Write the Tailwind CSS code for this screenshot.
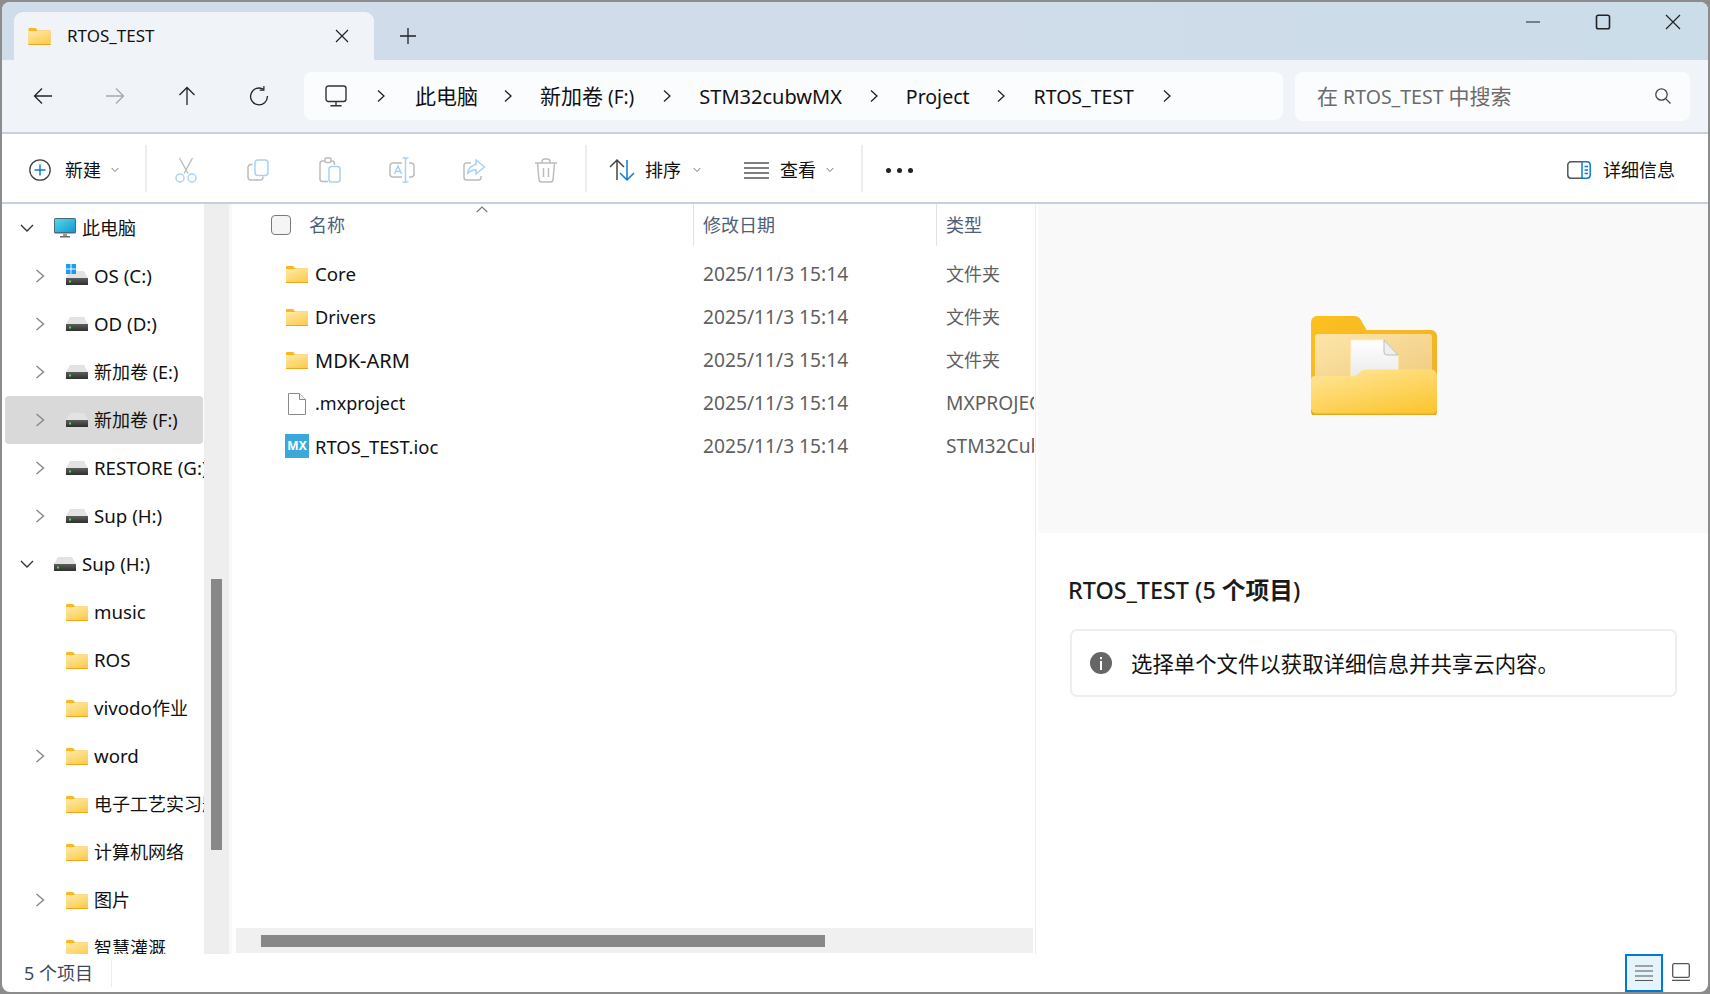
<!DOCTYPE html>
<html lang="zh-CN">
<head>
<meta charset="utf-8">
<title>RTOS_TEST</title>
<script src="https://cdn.jsdelivr.net/npm/@tailwindcss/browser@4"></script>
</head>
<body class="w-[1710px] h-[994px] overflow-hidden bg-[#8c8c8c] p-[2px] [font-family:'Noto_Sans','Noto_Sans_CJK_SC',sans-serif] text-[#111]">
<svg class="absolute w-0 h-0" aria-hidden="true">
  <defs>
    <linearGradient id="fb" x1="0" y1="0" x2="0.6" y2="1"><stop offset="0" stop-color="#ffeaa8"/><stop offset="1" stop-color="#fcce55"/></linearGradient>
    <linearGradient id="drv" x1="0" y1="0" x2="0" y2="1"><stop offset="0" stop-color="#5e5e5e"/><stop offset="1" stop-color="#2f2f2f"/></linearGradient>
    <linearGradient id="scr" x1="0" y1="0" x2="1" y2="1"><stop offset="0" stop-color="#52dbe6"/><stop offset="1" stop-color="#1596d6"/></linearGradient>
    <linearGradient id="bigback" x1="0" y1="0" x2="1" y2="1"><stop offset="0" stop-color="#fdc01f"/><stop offset="1" stop-color="#eeae2a"/></linearGradient>
    <linearGradient id="bigpaper" x1="0" y1="0" x2="1" y2="1"><stop offset="0" stop-color="#fde5a8"/><stop offset="1" stop-color="#efcb80"/></linearGradient>
    <linearGradient id="bigfront" x1="0.15" y1="0" x2="0.75" y2="1"><stop offset="0" stop-color="#ffe596"/><stop offset="1" stop-color="#fdc734"/></linearGradient>
    <linearGradient id="docg" x1="0" y1="0" x2="0" y2="1"><stop offset="0" stop-color="#ffffff"/><stop offset="1" stop-color="#e6e6e6"/></linearGradient>
    <symbol id="folder" viewBox="0 0 22 17">
      <path d="M0 1.2C0 .5.5 0 1.2 0h5.300c.5 0 .9.2 1.200.6L9 2.500h13V17H0z" fill="#fcb61f"/>
      <path d="M0 3h22v13H0z" fill="url(#fb)"/>
      <path d="M0 16h22v1H0z" fill="#eaa81e"/>
    </symbol>
    <symbol id="drive" viewBox="0 0 22 14">
      <path d="M4 0h14l4 7H0z" fill="#e3e3e3"/>
      <path d="M0 7h22v7H0z" fill="url(#drv)"/>
      <rect x="3" y="9.500" width="2" height="2" fill="#4be04b"/>
    </symbol>
  </defs>
</svg>

<div class="w-[1706px] h-[990px] bg-white rounded-[8px] overflow-hidden flex flex-col">
  <!-- title bar -->
  <div class="h-[58px] shrink-0 flex bg-gradient-to-r from-[#cfdcea] via-[#d1dcea] to-[#cbdde9]">
    <div class="w-[12px]"></div>
    <div class="mt-[10px] w-[360px] h-[48px] bg-[#f0f4f9] rounded-t-[9px] flex items-center pl-[14px]">
      <svg class="w-[23px] h-[17px]"><use href="#folder"/></svg>
      <span class="ml-[16px] text-[17px]">RTOS_TEST</span>
      <svg class="ml-auto mr-[24px] w-[16px] h-[16px]" viewBox="0 0 16 16" fill="none" stroke="#222" stroke-width="1.2"><path d="M2 2l12 12M14 2L2 14"/></svg>
    </div>
    <div class="mt-[10px] w-[68px] h-[48px] flex items-center justify-center">
      <svg class="w-[16px] h-[16px]" viewBox="0 0 16 16" fill="none" stroke="#222" stroke-width="1.3"><path d="M8 0v16M0 8h16"/></svg>
    </div>
    <div class="ml-auto flex h-[40px]">
      <div class="w-[70px] flex items-center justify-center"><svg class="w-[16px] h-[16px]" viewBox="0 0 16 16" stroke="#222" stroke-width="1.2"><path d="M1 8h14"/></svg></div>
      <div class="w-[70px] flex items-center justify-center"><svg class="w-[16px] h-[16px]" viewBox="0 0 16 16" fill="none" stroke="#222" stroke-width="1.6"><rect x="1.500" y="1.200" width="13" height="13.600" rx="1.800"/></svg></div>
      <div class="w-[70px] flex items-center justify-center"><svg class="w-[16px] h-[16px]" viewBox="0 0 16 16" fill="none" stroke="#222" stroke-width="1.2"><path d="M1 1l14 14M15 1L1 15"/></svg></div>
    </div>
  </div>

  <!-- address row -->
  <div class="h-[72px] shrink-0 bg-[#f0f4f9] flex items-center pl-[5px]">
    <div class="w-[72px] flex justify-center"><svg class="w-[20px] h-[20px]" viewBox="0 0 20 20" fill="none" stroke="#222" stroke-width="1.3"><path d="M19 10H1.500M9 2.500L1.500 10 9 17.500"/></svg></div>
    <div class="w-[72px] flex justify-center"><svg class="w-[20px] h-[20px]" viewBox="0 0 20 20" fill="none" stroke="#a8a8a8" stroke-width="1.3"><path d="M1 10h17.500M11 2.500l7.500 7.500-7.500 7.500"/></svg></div>
    <div class="w-[72px] flex justify-center"><svg class="w-[20px] h-[20px]" viewBox="0 0 20 20" fill="none" stroke="#222" stroke-width="1.3"><path d="M10 19V1.500M2.500 9L10 1.500 17.500 9"/></svg></div>
    <div class="w-[72px] flex justify-center"><svg class="w-[20px] h-[20px]" viewBox="0 0 20 20" fill="none" stroke="#222" stroke-width="1.3"><path d="M14.600 3.400A8.400 8.400 0 1 0 18.400 10"/><path d="M14.900 0v4.200h-4.200" stroke-width="1.2"/></svg></div>
    <div class="ml-[9px] w-[979px] h-[48px] bg-[#fbfcfe] rounded-[8px] flex items-center pl-[21px]">
      <svg class="w-[22px] h-[22px]" viewBox="0 0 22 22" fill="none" stroke="#333" stroke-width="1.4"><rect x="1" y="1" width="20" height="15.500" rx="2.500"/><path d="M11 16.500v4M5.500 20.700h11"/></svg>
      <svg class="ml-[29px] w-[10px] h-[14px]" viewBox="0 0 10 14" fill="none" stroke="#222" stroke-width="1.3"><path d="M2 1.500L8 7l-6 5.500"/></svg>
      <span class="ml-[29px] pt-[2px] text-[21px]">此电脑</span>
      <svg class="ml-[25px] w-[10px] h-[14px]" viewBox="0 0 10 14" fill="none" stroke="#222" stroke-width="1.3"><path d="M2 1.500L8 7l-6 5.500"/></svg>
      <span class="ml-[27px] pt-[2px] text-[19px] whitespace-nowrap"><span class="text-[21px]">新加卷</span> (F:)</span>
      <svg class="ml-[28px] w-[10px] h-[14px]" viewBox="0 0 10 14" fill="none" stroke="#222" stroke-width="1.3"><path d="M2 1.500L8 7l-6 5.500"/></svg>
      <span class="ml-[27px] pt-[2px] text-[20px]">STM32cubwMX</span>
      <svg class="ml-[27px] w-[10px] h-[14px]" viewBox="0 0 10 14" fill="none" stroke="#222" stroke-width="1.3"><path d="M2 1.500L8 7l-6 5.500"/></svg>
      <span class="ml-[27px] pt-[2px] text-[19.5px]">Project</span>
      <svg class="ml-[26px] w-[10px] h-[14px]" viewBox="0 0 10 14" fill="none" stroke="#222" stroke-width="1.3"><path d="M2 1.500L8 7l-6 5.500"/></svg>
      <span class="ml-[28px] pt-[2px] text-[19.5px]">RTOS_TEST</span>
      <svg class="ml-[28px] w-[10px] h-[14px]" viewBox="0 0 10 14" fill="none" stroke="#222" stroke-width="1.3"><path d="M2 1.500L8 7l-6 5.500"/></svg>
    </div>
    <div class="ml-[12px] w-[395px] h-[49px] bg-[#fbfcfe] rounded-[8px] flex items-center pl-[22px] text-[#6b6b6b]">
      <span class="pt-[2px] text-[19.5px] whitespace-nowrap"><span class="text-[21px]">在</span> RTOS_TEST <span class="text-[21px]">中搜索</span></span>
      <svg class="ml-auto mr-[18px] w-[18px] h-[18px]" viewBox="0 0 18 18" fill="none" stroke="#444" stroke-width="1.3"><circle cx="7.500" cy="7.500" r="5.700"/><path d="M11.600 11.600L16.500 16.500"/></svg>
    </div>
  </div>
  <div class="h-[2px] shrink-0 bg-[#c6d1dd]"></div>

  <!-- toolbar -->
  <div class="h-[68px] shrink-0 bg-white flex items-center pt-[4px]">
    <div class="w-[143px] flex items-center pl-[27px]">
      <svg class="w-[22px] h-[22px]" viewBox="0 0 22 22" fill="none"><circle cx="11" cy="11" r="10.200" stroke="#444" stroke-width="1.3"/><path d="M11 5.500v11M5.500 11h11" stroke="#0a7cd6" stroke-width="1.5"/></svg>
      <span class="ml-[14px] text-[18px]">新建</span>
      <svg class="ml-[10px] w-[8px] h-[6px]" viewBox="0 0 8 6" fill="none" stroke="#777"><path d="M.7 1l3.300 3.500L7.300 1"/></svg>
    </div>
    <div class="-mt-[4px] w-[2px] h-[47px] bg-[#eeeeee]"></div>
    <div class="ml-[3px] w-[72px] flex justify-center">
      <svg class="w-[24px] h-[26px]" viewBox="0 0 24 26" fill="none" stroke-width="1.4"><path d="M5.500 1l8.500 15.500M18.500 1L10 16.500" stroke="#bcbcbc"/><circle cx="6" cy="21" r="4" stroke="#a6d2f6"/><circle cx="18" cy="21" r="4" stroke="#a6d2f6"/></svg>
    </div>
    <div class="w-[72px] flex justify-center">
      <svg class="w-[24px] h-[24px]" viewBox="0 0 24 24" fill="none" stroke-width="1.5"><path d="M6.500 6.500H5a3 3 0 0 0-3 3V19a3 3 0 0 0 3 3h9a3 3 0 0 0 3-3v-.5" stroke="#bcbcbc"/><rect x="9" y="2" width="13" height="15.500" rx="3" stroke="#a6d2f6"/></svg>
    </div>
    <div class="w-[72px] flex justify-center">
      <svg class="w-[24px] h-[26px]" viewBox="0 0 24 26" fill="none" stroke-width="1.5"><path d="M7 4H4.500A2.500 2.500 0 0 0 2 6.500V22a2.500 2.500 0 0 0 2.500 2.500H10M16.500 8V6.500A2.500 2.500 0 0 0 14 4h-1.500" stroke="#bcbcbc"/><rect x="7" y="1" width="6" height="4.500" rx="1.500" stroke="#bcbcbc"/><rect x="11" y="9.500" width="11" height="15.500" rx="2.500" stroke="#a6d2f6"/></svg>
    </div>
    <div class="w-[72px] flex justify-center">
      <svg class="w-[26px] h-[26px]" viewBox="0 0 26 26" fill="none" stroke-width="1.5"><path d="M13 6H4a3 3 0 0 0-3 3v8a3 3 0 0 0 3 3h9M20 6h2a3 3 0 0 1 3 3v8a3 3 0 0 1-3 3h-2" stroke="#bcbcbc"/><path d="M16.500 1v24M13.500 1h6M13.500 25h6M5.500 17L9 9l3.500 8M6.800 14.500h4.500" stroke="#a6d2f6"/></svg>
    </div>
    <div class="w-[72px] flex justify-center">
      <svg class="w-[24px] h-[24px]" viewBox="0 0 24 24" fill="none" stroke-width="1.5"><path d="M9 5H4.500A2.500 2.500 0 0 0 2 7.500v12A2.500 2.500 0 0 0 4.500 22h12A2.500 2.500 0 0 0 19 19.500V18" stroke="#bcbcbc"/><path d="M14 2l8.500 7-8.500 7v-4c-4 0-6.500 1-8.500 4 .5-5 3.500-8.500 8.500-9.500z" stroke="#a6d2f6"/></svg>
    </div>
    <div class="w-[72px] flex justify-center">
      <svg class="w-[22px] h-[25px]" viewBox="0 0 22 25" fill="none" stroke="#bcbcbc" stroke-width="1.5"><path d="M0 5h22M7 5V3.500A2.500 2.500 0 0 1 9.500 1h3A2.500 2.500 0 0 1 15 3.500V5M2.500 5l1.500 17a2.500 2.500 0 0 0 2.500 2h9a2.500 2.500 0 0 0 2.500-2l1.500-17M8.500 10v9M13.500 10v9"/></svg>
    </div>
    <div class="-mt-[4px] ml-[3px] w-[2px] h-[47px] bg-[#eeeeee]"></div>
    <div class="w-[274px] flex items-center">
      <svg class="ml-[22px] w-[26px] h-[24px]" viewBox="0 0 26 24" fill="none" stroke-width="1.5"><path d="M8 22V2M1 9l7-7 7 7" stroke="#444"/><path d="M18 2v20M11 15l7 7 7-7" stroke="#0a7cd6"/></svg>
      <span class="ml-[10px] text-[18px]">排序</span>
      <svg class="ml-[12px] w-[8px] h-[6px]" viewBox="0 0 8 6" fill="none" stroke="#777"><path d="M.7 1l3.300 3.500L7.300 1"/></svg>
      <svg class="ml-[43px] w-[25px] h-[17px]" viewBox="0 0 25 17" stroke="#555" stroke-width="1.5"><path d="M0 1h25M0 6h25M0 11h25M0 16h25"/></svg>
      <span class="ml-[11px] text-[18px]">查看</span>
      <svg class="ml-[10px] w-[8px] h-[6px]" viewBox="0 0 8 6" fill="none" stroke="#777"><path d="M.7 1l3.300 3.500L7.300 1"/></svg>
    </div>
    <div class="-mt-[4px] w-[2px] h-[47px] bg-[#eeeeee]"></div>
    <div class="ml-[23px] flex gap-[6px]">
      <div class="w-[5px] h-[5px] rounded-full bg-[#222]"></div>
      <div class="w-[5px] h-[5px] rounded-full bg-[#222]"></div>
      <div class="w-[5px] h-[5px] rounded-full bg-[#222]"></div>
    </div>
    <svg class="ml-auto w-[24px] h-[18px]" viewBox="0 0 24 18" fill="none"><path d="M15 .8H4A3.200 3.200 0 0 0 .8 4v10A3.200 3.200 0 0 0 4 17.200h11" stroke="#555" stroke-width="1.5"/><path d="M15 .8h5A3.200 3.200 0 0 1 23.200 4v10a3.200 3.200 0 0 1-3.200 3.200h-5z" stroke="#0a7cd6" stroke-width="1.5"/><path d="M17.500 5.500h3.500M17.500 9h3.500M17.500 12.500h3.500" stroke="#0a7cd6" stroke-width="1.5"/></svg>
    <span class="ml-[12px] mr-[33px] text-[18px]">详细信息</span>
  </div>
  <div class="h-[2px] shrink-0 bg-[#c6d1dd]"></div>

  <!-- main -->
  <div class="h-[750px] shrink-0 flex">
    <!-- nav -->
    <div class="w-[202px] h-full overflow-hidden shrink-0">
      <div class="w-[198px] ml-[3px] h-[48px] flex items-center pl-[15px] whitespace-nowrap">
        <svg class="w-[14px] h-[10px] shrink-0" viewBox="0 0 14 10" fill="none" stroke="#333" stroke-width="1.4"><path d="M1 2l6 6 6-6"/></svg>
        <svg class="ml-[20px] w-[22px] h-[20px] shrink-0" viewBox="0 0 22 20"><rect width="22" height="15.500" rx="1.500" fill="#4a6a78"/><rect x="1" y="1" width="20" height="13" fill="url(#scr)"/><path d="M9 15.500h4V18H9z" fill="#9a9a9a"/><path d="M6 18h10v1.500H6z" fill="#6c6c6c"/></svg>
        <span class="ml-[6px] text-[18px]">此电脑</span>
      </div>
      <div class="w-[198px] ml-[3px] h-[48px] flex items-center pl-[28px] whitespace-nowrap">
        <svg class="w-[14px] h-[16px] shrink-0" viewBox="0 0 14 16" fill="none" stroke="#8a8a8a" stroke-width="1.5"><path d="M3.500 2l7 6-7 6"/></svg>
        <div class="ml-[19px] w-[22px] h-[24px] shrink-0 flex flex-col">
          <svg class="w-[10px] h-[10px] -mb-[3px] relative" viewBox="0 0 10 10" fill="#1e9bf0"><path d="M0 0h4.500v4.500H0zM5.500 0H10v4.500H5.500zM0 5.500h4.500V10H0zM5.500 5.500H10V10H5.500z"/></svg>
          <svg class="w-[22px] h-[14px]"><use href="#drive"/></svg>
        </div>
        <span class="ml-[6px] text-[18.7px]">OS (C:)</span>
      </div>
      <div class="w-[198px] ml-[3px] h-[48px] flex items-center pl-[28px] whitespace-nowrap">
        <svg class="w-[14px] h-[16px] shrink-0" viewBox="0 0 14 16" fill="none" stroke="#8a8a8a" stroke-width="1.5"><path d="M3.500 2l7 6-7 6"/></svg>
        <svg class="ml-[19px] w-[22px] h-[14px] shrink-0"><use href="#drive"/></svg>
        <span class="ml-[6px] text-[18.7px]">OD (D:)</span>
      </div>
      <div class="w-[198px] ml-[3px] h-[48px] flex items-center pl-[28px] whitespace-nowrap">
        <svg class="w-[14px] h-[16px] shrink-0" viewBox="0 0 14 16" fill="none" stroke="#8a8a8a" stroke-width="1.5"><path d="M3.500 2l7 6-7 6"/></svg>
        <svg class="ml-[19px] w-[22px] h-[14px] shrink-0"><use href="#drive"/></svg>
        <span class="ml-[6px] text-[18px]">新加卷 (E:)</span>
      </div>
      <div class="w-[198px] ml-[3px] h-[48px] flex items-center pl-[28px] whitespace-nowrap bg-[#d9d9d9] rounded-[4px]">
        <svg class="w-[14px] h-[16px] shrink-0" viewBox="0 0 14 16" fill="none" stroke="#8a8a8a" stroke-width="1.5"><path d="M3.500 2l7 6-7 6"/></svg>
        <svg class="ml-[19px] w-[22px] h-[14px] shrink-0"><use href="#drive"/></svg>
        <span class="ml-[6px] text-[18px]">新加卷 (F:)</span>
      </div>
      <div class="w-[198px] ml-[3px] h-[48px] flex items-center pl-[28px] whitespace-nowrap">
        <svg class="w-[14px] h-[16px] shrink-0" viewBox="0 0 14 16" fill="none" stroke="#8a8a8a" stroke-width="1.5"><path d="M3.500 2l7 6-7 6"/></svg>
        <svg class="ml-[19px] w-[22px] h-[14px] shrink-0"><use href="#drive"/></svg>
        <span class="ml-[6px] text-[18.7px]">RESTORE (G:)</span>
      </div>
      <div class="w-[198px] ml-[3px] h-[48px] flex items-center pl-[28px] whitespace-nowrap">
        <svg class="w-[14px] h-[16px] shrink-0" viewBox="0 0 14 16" fill="none" stroke="#8a8a8a" stroke-width="1.5"><path d="M3.500 2l7 6-7 6"/></svg>
        <svg class="ml-[19px] w-[22px] h-[14px] shrink-0"><use href="#drive"/></svg>
        <span class="ml-[6px] text-[18.7px]">Sup (H:)</span>
      </div>
      <div class="w-[198px] ml-[3px] h-[48px] flex items-center pl-[15px] whitespace-nowrap">
        <svg class="w-[14px] h-[10px] shrink-0" viewBox="0 0 14 10" fill="none" stroke="#333" stroke-width="1.4"><path d="M1 2l6 6 6-6"/></svg>
        <svg class="ml-[20px] w-[22px] h-[14px] shrink-0"><use href="#drive"/></svg>
        <span class="ml-[6px] text-[18.7px]">Sup (H:)</span>
      </div>
      <div class="w-[198px] ml-[3px] h-[48px] flex items-center pl-[61px] whitespace-nowrap">
        <svg class="w-[22px] h-[17px] shrink-0"><use href="#folder"/></svg>
        <span class="ml-[6px] text-[18.7px]">music</span>
      </div>
      <div class="w-[198px] ml-[3px] h-[48px] flex items-center pl-[61px] whitespace-nowrap">
        <svg class="w-[22px] h-[17px] shrink-0"><use href="#folder"/></svg>
        <span class="ml-[6px] text-[18.7px]">ROS</span>
      </div>
      <div class="w-[198px] ml-[3px] h-[48px] flex items-center pl-[61px] whitespace-nowrap">
        <svg class="w-[22px] h-[17px] shrink-0"><use href="#folder"/></svg>
        <span class="ml-[6px] text-[18.7px]">vivodo<span class="text-[18px]">作业</span></span>
      </div>
      <div class="w-[198px] ml-[3px] h-[48px] flex items-center pl-[28px] whitespace-nowrap">
        <svg class="w-[14px] h-[16px] shrink-0" viewBox="0 0 14 16" fill="none" stroke="#8a8a8a" stroke-width="1.5"><path d="M3.500 2l7 6-7 6"/></svg>
        <svg class="ml-[19px] w-[22px] h-[17px] shrink-0"><use href="#folder"/></svg>
        <span class="ml-[6px] text-[18.7px]">word</span>
      </div>
      <div class="w-[198px] ml-[3px] h-[48px] flex items-center pl-[61px] whitespace-nowrap">
        <svg class="w-[22px] h-[17px] shrink-0"><use href="#folder"/></svg>
        <span class="ml-[6px] text-[18px]">电子工艺实习题</span>
      </div>
      <div class="w-[198px] ml-[3px] h-[48px] flex items-center pl-[61px] whitespace-nowrap">
        <svg class="w-[22px] h-[17px] shrink-0"><use href="#folder"/></svg>
        <span class="ml-[6px] text-[18px]">计算机网络</span>
      </div>
      <div class="w-[198px] ml-[3px] h-[48px] flex items-center pl-[28px] whitespace-nowrap">
        <svg class="w-[14px] h-[16px] shrink-0" viewBox="0 0 14 16" fill="none" stroke="#8a8a8a" stroke-width="1.5"><path d="M3.500 2l7 6-7 6"/></svg>
        <svg class="ml-[19px] w-[22px] h-[17px] shrink-0"><use href="#folder"/></svg>
        <span class="ml-[6px] text-[18px]">图片</span>
      </div>
      <div class="w-[198px] ml-[3px] h-[48px] flex items-center pl-[61px] whitespace-nowrap">
        <svg class="w-[22px] h-[17px] shrink-0"><use href="#folder"/></svg>
        <span class="ml-[6px] text-[18px]">智慧灌溉</span>
      </div>
    </div>
    <!-- nav scrollbar -->
    <div class="w-[25px] h-full bg-[#eeeeee] shrink-0 pl-[7px] pt-[375px]">
      <div class="w-[11px] h-[271px] bg-[#888888]"></div>
    </div>
    <div class="w-[3px] h-full bg-[#f8f8f8] shrink-0"></div>

    <!-- file list -->
    <div class="relative w-[802px] h-full shrink-0 flex flex-col">
      <svg class="absolute left-[244px] top-[2px] w-[12px] h-[7px]" viewBox="0 0 12 7" fill="none" stroke="#777" stroke-width="1.1"><path d="M.7 6L6 1l5.300 5"/></svg>
      <div class="h-[42px] shrink-0 flex text-[18px] text-[#4d6078]">
        <div class="w-[461px] flex items-center pl-[39px]">
          <div class="w-[20px] h-[20px] rounded-[4px] border border-[#7a7a7a] bg-[#f5f5f5]"></div>
          <span class="ml-[18px]">名称</span>
        </div>
        <div class="w-[243px] flex items-center pl-[9px] border-l border-[#e3e3e3]">修改日期</div>
        <div class="w-[98px] flex items-center pl-[9px] border-l border-[#e3e3e3]">类型</div>
      </div>
      <div class="flex-1 pt-[7px] text-[19.2px]">
        <div class="h-[43px] flex items-center">
          <div class="w-[461px] flex items-center pl-[54px]"><svg class="w-[22px] h-[17px]"><use href="#folder"/></svg><span class="ml-[7px] text-[18.7px]">Core</span></div>
          <div class="w-[243px] pl-[10px] text-[#5f5f5f]">2025/11/3 15:14</div>
          <div class="w-[98px] pl-[10px] text-[18px] text-[#5f5f5f] overflow-hidden whitespace-nowrap">文件夹</div>
        </div>
        <div class="h-[43px] flex items-center">
          <div class="w-[461px] flex items-center pl-[54px]"><svg class="w-[22px] h-[17px]"><use href="#folder"/></svg><span class="ml-[7px] text-[18.1px]">Drivers</span></div>
          <div class="w-[243px] pl-[10px] text-[#5f5f5f]">2025/11/3 15:14</div>
          <div class="w-[98px] pl-[10px] text-[18px] text-[#5f5f5f] overflow-hidden whitespace-nowrap">文件夹</div>
        </div>
        <div class="h-[43px] flex items-center">
          <div class="w-[461px] flex items-center pl-[54px]"><svg class="w-[22px] h-[17px]"><use href="#folder"/></svg><span class="ml-[7px] text-[20px]">MDK-ARM</span></div>
          <div class="w-[243px] pl-[10px] text-[#5f5f5f]">2025/11/3 15:14</div>
          <div class="w-[98px] pl-[10px] text-[18px] text-[#5f5f5f] overflow-hidden whitespace-nowrap">文件夹</div>
        </div>
        <div class="h-[43px] flex items-center">
          <div class="w-[461px] flex items-center pl-[56px]"><svg class="w-[18px] h-[22px]" viewBox="0 0 18 22" fill="none" stroke="#8a8a8a"><path d="M.5.500h11l6 6v15H.500z" fill="#fff"/><path d="M11.500.500v6h6" fill="#f2f2f2"/></svg><span class="ml-[9px] text-[18px]">.mxproject</span></div>
          <div class="w-[243px] pl-[10px] text-[#5f5f5f]">2025/11/3 15:14</div>
          <div class="w-[98px] pl-[10px] text-[#5f5f5f] overflow-hidden whitespace-nowrap">MXPROJECT 文件</div>
        </div>
        <div class="h-[43px] flex items-center">
          <div class="w-[461px] flex items-center pl-[53px]"><div class="w-[24px] h-[24px] bg-[#39a9dc] flex items-center justify-center text-white text-[12px] font-bold leading-none">MX</div><span class="ml-[6px] text-[18.4px]">RTOS_TEST.ioc</span></div>
          <div class="w-[243px] pl-[10px] text-[#5f5f5f]">2025/11/3 15:14</div>
          <div class="w-[98px] pl-[10px] text-[#5f5f5f] overflow-hidden whitespace-nowrap">STM32CubeMX</div>
        </div>
      </div>
      <div class="h-[25px] mb-[1px] ml-[4px] mr-[1px] shrink-0 bg-[#f0f0f0] pl-[25px] pt-[7px]">
        <div class="w-[564px] h-[12px] bg-[#888888]"></div>
      </div>
    </div>

    <!-- divider -->
    <div class="w-[4px] h-full shrink-0 pl-[1px]"><div class="w-[1px] h-full bg-[#eeeeee]"></div></div>

    <!-- details -->
    <div class="flex-1 h-full flex flex-col">
      <div class="h-[329px] shrink-0 bg-[#f9f9f9] flex justify-center pt-[112px] pl-[2px]">
        <svg class="w-[126px] h-[99px]" viewBox="0 0 126 99">
          <path d="M0 6a6 6 0 0 1 6-6h37a8 8 0 0 1 7 4l5.500 10H120a6 6 0 0 1 6 6v73a6 6 0 0 1-6 6H6a6 6 0 0 1-6-6z" fill="url(#bigback)"/>
          <rect x="4" y="18" width="117" height="50" rx="3" fill="url(#bigpaper)"/>
          <path d="M40 24h33l14 15v30H40z" fill="url(#docg)" stroke="#fff2cf" stroke-width="1"/>
          <path d="M73 24v12a3 3 0 0 0 3 3h11z" fill="#efefef" stroke="#bdbdbd" stroke-width="1"/>
          <path d="M0 64a4 4 0 0 1 4-4h36c5 0 6-1 8.500-3.500 2-2 3.500-3 7-3H120a6 6 0 0 1 6 6v34a6 6 0 0 1-6 6H6a6 6 0 0 1-6-6z" fill="#e9a921" transform="translate(0 2)"/>
          <path d="M0 64a4 4 0 0 1 4-4h36c5 0 6-1 8.500-3.500 2-2 3.500-3 7-3H120a6 6 0 0 1 6 6v33a5 5 0 0 1-5 5H5a5 5 0 0 1-5-5z" fill="url(#bigfront)"/>
        </svg>
      </div>
      <div class="h-[96px] shrink-0 flex items-end pl-[30px] pb-[24px]">
        <span class="text-[23.4px] font-medium leading-[30px] whitespace-nowrap text-[#1a1a1a]">RTOS_TEST (5 <span class="font-bold text-[23.7px]">个项目</span>)</span>
      </div>
      <div class="ml-[32px] w-[607px] h-[68px] border-2 border-[#eeeeee] rounded-[7px] flex items-center pl-[18px]">
        <div class="w-[22px] h-[22px] rounded-full bg-[#666] flex items-center justify-center">
          <svg class="w-[4px] h-[13px]" viewBox="0 0 4 13" fill="#fff"><rect x="1" y="0" width="2" height="2.200"/><rect x="1" y="4" width="2" height="9"/></svg>
        </div>
        <span class="ml-[19px] pt-[2px] text-[21.4px] whitespace-nowrap">选择单个文件以获取详细信息并共享云内容。</span>
      </div>
    </div>
  </div>

  <!-- status bar -->
  <div class="h-[38px] shrink-0 flex items-start">
    <div class="ml-[22px] h-[38px] flex items-center text-[18px] text-[#3a4a5c]">5 个项目</div>
    <div class="ml-[18px] mt-[6px] w-[1px] h-[27px] bg-[#eeeeee]"></div>
    <div class="ml-auto w-[38px] h-[38px] border-2 border-[#0078d4] bg-[#e5f3fb] flex items-center justify-center">
      <svg class="w-[18px] h-[16px]" viewBox="0 0 18 16" stroke="#555" stroke-width="1.2"><path d="M0 1h18M0 6h18M0 11h18M0 15.500h18"/></svg>
    </div>
    <svg class="ml-[9px] mr-[18px] mt-[9px] w-[18px] h-[18px]" viewBox="0 0 18 18" fill="none" stroke="#555" stroke-width="1.3"><rect x=".7" y=".7" width="16.600" height="13.600" rx="1.500"/><path d="M0 17.300h18"/></svg>
  </div>
</div>
</body>
</html>
